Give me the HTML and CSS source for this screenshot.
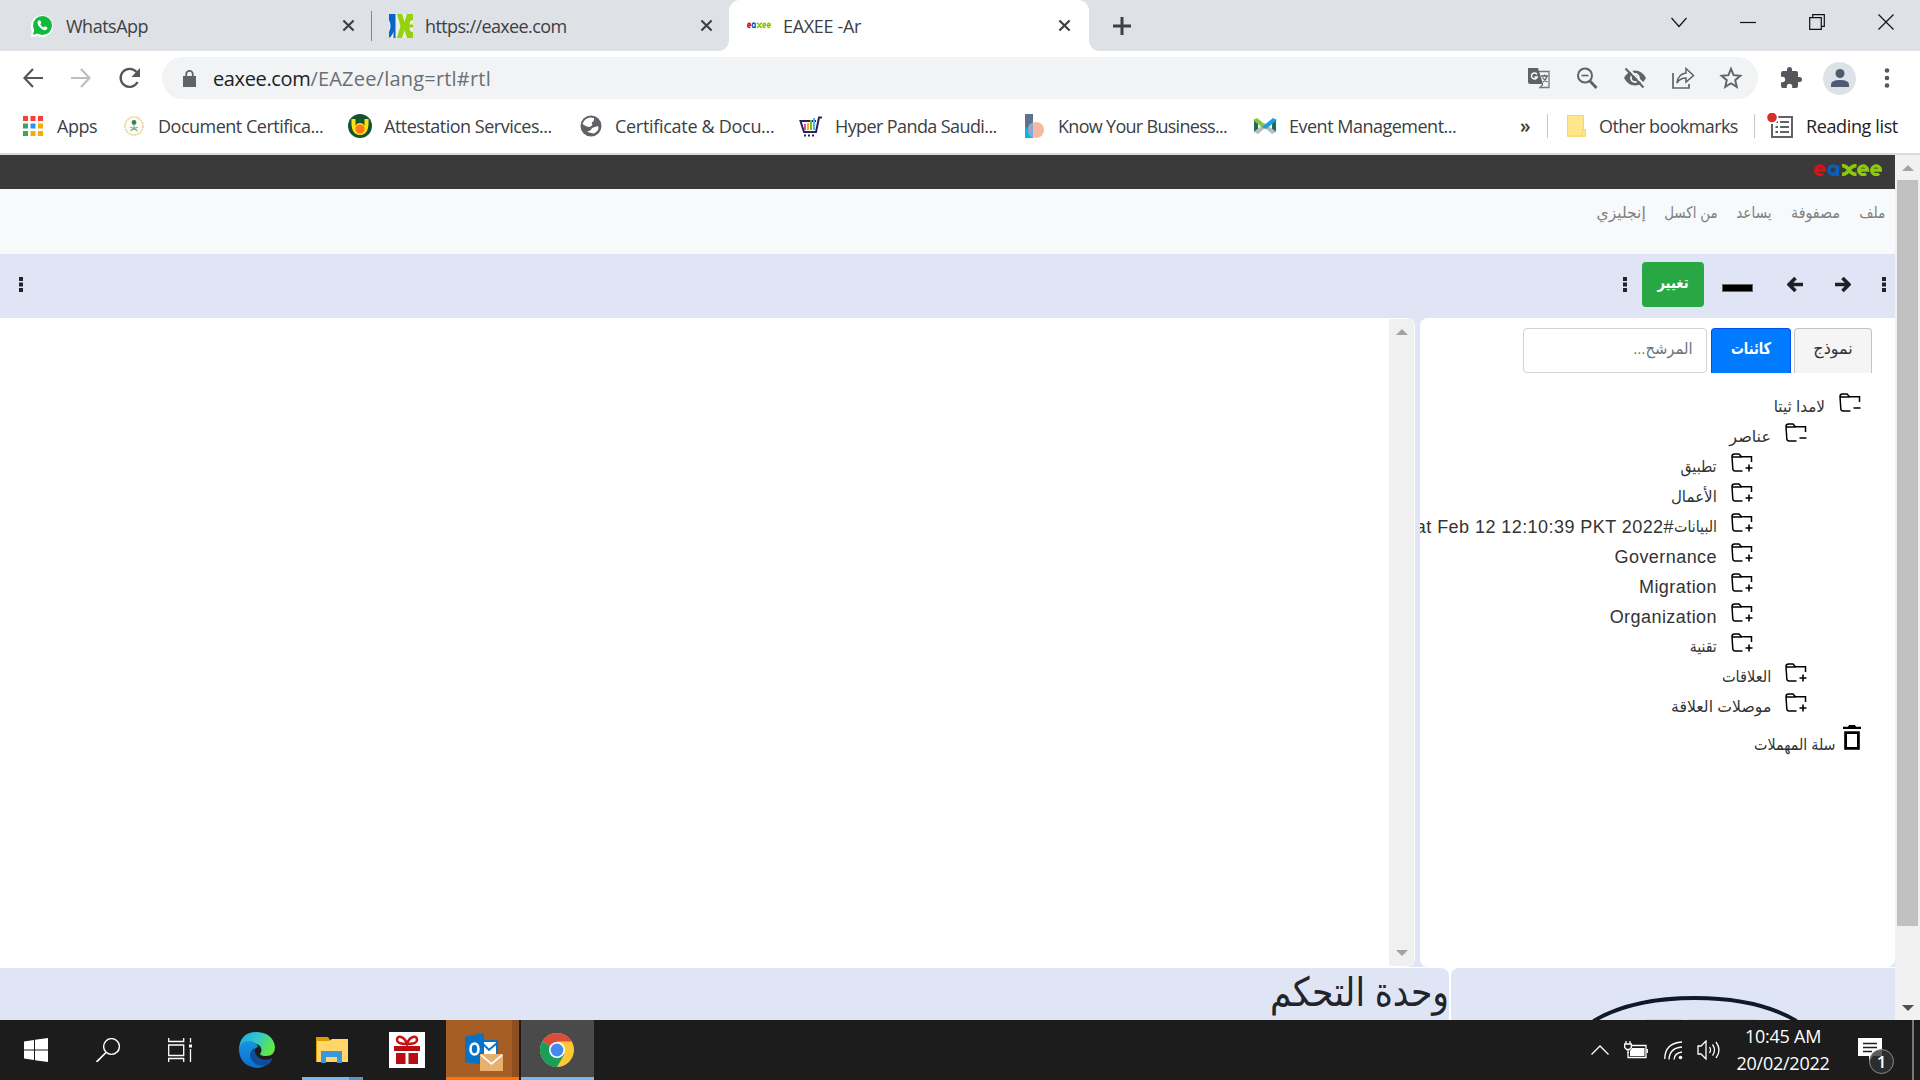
FILE: index.html
```html
<!DOCTYPE html>
<html lang="ar">
<head>
<meta charset="utf-8">
<title>EAXEE -Ar</title>
<link rel="stylesheet" href="styles.css">
</head>
<body>
<svg class="defs" width="0" height="0">
  <symbol id="i-close" viewBox="0 0 14 14"><path d="M1.5 1.5l11 11M12.5 1.5l-11 11" stroke="#3c4043" stroke-width="2.3" fill="none"/></symbol>
  <symbol id="i-dots" viewBox="0 0 6 16"><path d="M1 0h4v4H1zM1 5.5h4v4H1zM1 11h4v4H1z" fill="#212529"/></symbol>
  <symbol id="i-plus" viewBox="0 0 22 20"><path d="M11.500 18H4.200Q2 18 1.800 15.800L1 3.500Q1 1 3.500 1H8l2.500 2.700H20.500V9M1.200 4H11" fill="none" stroke="#000" stroke-width="1.500"/><path d="M18 11.500v7M14.500 15h7" stroke="#000" stroke-width="1.600"/></symbol>
  <symbol id="i-minus" viewBox="0 0 22 20"><path d="M11.500 18H4.200Q2 18 1.800 15.800L1 3.500Q1 1 3.500 1H8l2.500 2.700H20.500V9M1.200 4H11" fill="none" stroke="#000" stroke-width="1.500"/><path d="M14.500 15h7" stroke="#000" stroke-width="1.600"/></symbol>
  <symbol id="i-logo" viewBox="0 0 68 12"><g fill="none" stroke-width="3.200"><path d="M1.800 6.200H10.500A4.400 4.400 0 1 0 9 9.600" stroke="#d8111b"/><path d="M23.500 1.600V12M23.500 6A4.300 4.300 0 1 0 19 10.400Q22.500 10 23.500 6" stroke="#0a5fc0"/><path d="M28 1.700Q32 1.500 35 6Q38 10.500 42.500 10.300M42.500 1.700Q38 1.500 35 6Q32 10.500 28 10.300" stroke="#8cc90b" stroke-width="3.600"/><path d="M44.800 6.200H53.500A4.400 4.400 0 1 0 52 9.600M57.800 6.200H66.500A4.400 4.400 0 1 0 65 9.600" stroke="#8cc90b"/></g></symbol>
</svg>

<header class="tabstrip">
  <div class="tab tab-first">
    <svg width="24" height="24" viewBox="0 0 24 24"><path d="M1 23L2 17A11 11 0 1 1 7 22Z" fill="#fff"/><circle cx="12.500" cy="11.500" r="9.500" fill="#12b93c"/><path d="M3 21l1.500-6 4 4z" fill="#12b93c"/><path d="M8.500 6.500q1.500-1 2.300 1l.5 1.600-1 1.200q1.200 2.300 3.400 3.200l1.300-1.300 2.300 1.200q.5 1.800-1.500 2.600-2.500.7-5.400-2-3-2.900-3-5.300 0-1.400 1.100-2.200z" fill="#fff"/></svg>
    <span class="t t-whats">WhatsApp</span>
    <svg class="x" width="13" height="13"><use href="#i-close"/></svg>
  </div>
  <div class="tab tab-second">
    <svg width="24" height="24" viewBox="0 0 24 24"><path fill="#e8f0e0" d="M0 0h24v24H0z"/><path d="M0 0h6.500v24H4.500V17Q3.500 22 0 24V18Q3 12 0 6z" fill="#0c63c7"/><path d="M8 0h5l2.500 8L18 0h6v6q-3.500 0-3.500 4.500H24v3h-3.500Q20.500 18 24 18v6h-6l-2.500-8L13 24H8l3.500-12z" fill="#95d10c"/></svg>
    <span class="t t-url">https://eaxee.com</span>
    <svg class="x" width="13" height="13"><use href="#i-close"/></svg>
  </div>
  <div class="tab tab-active">
    <svg width="24" height="7" viewBox="0 0 68 14" preserveAspectRatio="none"><use href="#i-logo" width="68" height="13"/></svg>
    <span class="t t-ar">EAXEE -Ar</span>
    <svg class="x" width="13" height="13"><use href="#i-close"/></svg>
  </div>
  <svg class="newtab" width="18" height="18" viewBox="0 0 18 18"><path d="M9 0v18M0 9h18" stroke="#3c4043" stroke-width="3"/></svg>
  <div class="winctl">
    <svg width="16" height="16" viewBox="0 0 16 16"><path d="M.5 4L8 12.500l7.500-8.500"/></svg>
    <svg width="16" height="16" viewBox="0 0 16 16"><path d="M0 8.500h16"/></svg>
    <svg width="16" height="16" viewBox="0 0 16 16"><path d="M.7 3.700h11.600v11.600H.7zM3.700 3.700V.7h11.600v11.600h-3"/></svg>
    <svg width="16" height="16" viewBox="0 0 16 16"><path d="M.5.500l15 15M15.500.500l-15 15"/></svg>
  </div>
</header>

<nav class="toolbar">
  <svg width="20" height="20" viewBox="0 0 20 20"><path d="M20 10H1.500M10 1L1.500 10l8.500 9" fill="none" stroke="#54585c" stroke-width="2.200"/></svg>
  <svg width="20" height="20" viewBox="0 0 20 20"><path d="M0 10h18.500M10 1l8.500 9-8.500 9" fill="none" stroke="#bcbec1" stroke-width="2.200"/></svg>
  <svg width="22" height="22" viewBox="0 0 22 22"><path d="M18.600 15A9 9 0 1 1 17.500 5" fill="none" stroke="#54585c" stroke-width="2.300"/><path d="M21 1v9h-8.500z" fill="#54585c"/></svg>
  <div class="omnibox">
    <svg class="lock" width="13" height="17" viewBox="0 0 13 17"><path d="M0 6h13v11H0z" fill="#5f6368"/><path d="M3.200 7V4.200a3.300 3.300 0 0 1 6.600 0V7" fill="none" stroke="#5f6368" stroke-width="1.800"/></svg>
    <span class="url"><b>eaxee.com</b>/EAZee/lang=rtl#rtl</span>
    <div class="omni-icons">
      <svg viewBox="0 0 24 24"><path d="M1 2h10l5 16H3q-2 0-2-2z" fill="#5f6368"/><path d="M12 5.500h10v16H13l3-3.500" fill="none" stroke="#73777b" stroke-width="1.300"/><path d="M14 10h7M17.500 8.500V10M20 10q-1 4-4 6M15.500 11.500q2 3 5 4.500" fill="none" stroke="#5f6368" stroke-width="1.300"/><path d="M10 8.300A3 3 0 1 0 10.300 11H7.500" fill="none" stroke="#fff" stroke-width="1.500"/></svg>
      <svg viewBox="0 0 24 24"><circle cx="10" cy="9.500" r="7" fill="none" stroke="#5f6368" stroke-width="2"/><path d="M15 15l6.500 7" stroke="#5f6368" stroke-width="2.800"/><path d="M6.500 9.500h7" stroke="#5f6368" stroke-width="1.600"/></svg>
      <svg viewBox="0 0 24 24"><path d="M1 12Q5 4.500 12 4.500T23 12Q19 19.500 12 19.500T1 12z" fill="#5f6368"/><circle cx="12" cy="12" r="4" fill="none" stroke="#f1f3f4" stroke-width="1.800"/><path d="M4.500 1.500L22.500 20" stroke="#f1f3f4" stroke-width="2"/><path d="M2.500 2.500L20.500 21.500" stroke="#5f6368" stroke-width="2"/></svg>
      <svg viewBox="0 0 24 24"><path d="M2 7v15h16v-4" fill="none" stroke="#5f6368" stroke-width="1.700"/><path d="M15 2.500l7.500 7L15 16v-4q-6 0-9 5Q7 8 15 7z" fill="none" stroke="#5f6368" stroke-width="1.500"/></svg>
      <svg viewBox="0 0 24 24"><path d="M12 2.800l2.600 6.300 6.800.6-5.200 4.500 1.600 6.700L12 17.300l-5.800 3.600 1.600-6.700-5.200-4.500 6.800-.6z" fill="none" stroke="#5f6368" stroke-width="1.900"/></svg>
    </div>
  </div>
  <div class="chrome-icons">
    <svg viewBox="0 0 24 24"><path d="M20.500 11H19V7a2 2 0 0 0-2-2h-4V3.500a2.500 2.500 0 0 0-5 0V5H4a2 2 0 0 0-2 2v3.800h1.500a2.700 2.700 0 0 1 0 5.400H2V20a2 2 0 0 0 2 2h3.800v-1.500a2.700 2.700 0 0 1 5.400 0V22H17a2 2 0 0 0 2-2v-4h1.500a2.500 2.500 0 0 0 0-5z" fill="#54585c"/></svg>
    <div class="avatar"><svg viewBox="0 0 24 24"><circle cx="12" cy="7.500" r="4.500" fill="#4c5a73"/><path d="M3 21v-2.500Q3 14 12 14t9 4.500V21z" fill="#4c5a73"/></svg></div>
    <svg viewBox="0 0 24 24"><g fill="#54585c"><circle cx="12" cy="4.500" r="2.300"/><circle cx="12" cy="12" r="2.300"/><circle cx="12" cy="19.500" r="2.300"/></g></svg>
  </div>
</nav>

<nav class="bookmarks">
  <div class="bm"><svg viewBox="0 0 24 24"><path d="M2 2h5v5H2zM9.500 2h5v5h-5zM17 2h5v5h-5z" fill="#f44336"/><path d="M2 9.500h5v5H2zM2 17h5v5H2z" fill="#3ba55c"/><path d="M9.500 9.500h5v5h-5z" fill="#2196f3"/><path d="M17 9.500h5v5h-5zM9.500 17h5v5h-5zM17 17h5v5h-5z" fill="#f9ab00"/></svg><span class="t b1">Apps</span></div>
  <div class="bm"><svg viewBox="0 0 24 24"><circle cx="12" cy="12" r="9" fill="#fffdf5" stroke="#ead49a" stroke-width="1.700" stroke-dasharray="2.200 .7"/><circle cx="12" cy="8.500" r="2.400" fill="#2d8a58"/><path d="M12 10v5M8 13.500q4 0 7.500 3.500M16 13.500q-4 0-7.500 3.500" stroke="#7fae92" stroke-width="1.100" fill="none"/></svg><span class="t b2">Document Certifica...</span></div>
  <div class="bm"><svg viewBox="0 0 24 24"><circle cx="12" cy="12" r="12" fill="#14532f"/><path d="M3.500 5h4v7q1-3 4.500-3t4.500 3V5h4q1 16-8.500 16T3.500 5z" fill="#ffe018"/><circle cx="12" cy="15" r="4.600" fill="#ff7818"/></svg><span class="t b3">Attestation Services...</span></div>
  <div class="bm"><svg viewBox="0 0 24 24"><circle cx="12" cy="12" r="10.500" fill="#5f6368"/><path d="M3.500 10q5 4 8 2.500t1-4q3-1 2.500-4.500Q9 2 5 7zM13 14l6-2q2 4-4 7.500-4-.5-7-2 4-.5 5-3.500z" fill="#fff"/></svg><span class="t b4">Certificate &amp; Docu...</span></div>
  <div class="bm"><svg viewBox="0 0 24 24"><path d="M23 3.500h-3L17 18H5L1.500 7H17" fill="none" stroke="#28235f" stroke-width="2"/><path d="M6 10v6" stroke="#ef4c9c" stroke-width="2"/><path d="M9 9v7" stroke="#f5b11d" stroke-width="2"/><path d="M12 6v10" stroke="#7bb928" stroke-width="2"/><path d="M15 4v12" stroke="#4eb8ea" stroke-width="2"/><path d="M5 21.500h2M9 21.500h2M13 21.500h2" stroke="#28235f" stroke-width="2"/></svg><span class="t b5">Hyper Panda Saudi...</span></div>
  <div class="bm"><svg viewBox="0 0 24 24"><path d="M3 0h8v24H3z" fill="#5b738c"/><path d="M3 12l8 12H3z" fill="#00b8ea"/><circle cx="14" cy="16" r="8" fill="#f5b9a2"/><path d="M11 8.500v15A8 8 0 0 1 11 8.500z" fill="#8ea7cf"/></svg><span class="t b6">Know Your Business...</span></div>
  <div class="bm"><svg viewBox="0 0 24 24"><path d="M1 6v12l4-3V9zM23 6v12l-4-3V9z" fill="#246a5a"/><path d="M1 18l11-9 11 9-4 2-7-6-7 6z" fill="#b5bcc4"/><path d="M0 6l4-2 10 8-3 3z" fill="#87c63b"/><path d="M24 6l-4-2-11 9 4 2z" fill="#1d9ce3"/></svg><span class="t b7">Event Management...</span></div>
  <span class="more">»</span>
  <div class="bm other"><svg viewBox="0 0 24 24"><path d="M3 1h17v14h2v8H3z" fill="#ffe68d"/><path d="M3.500 1.500h16v14h2v6.500h-18zM18 22v-6.500h2" fill="none" stroke="#f7d662"/></svg><span class="t b8">Other bookmarks</span></div>
  <div class="bm reading"><svg viewBox="0 0 28 26"><path d="M5 4h20v20H5z" fill="#fff" stroke="#5f6368" stroke-width="2"/><path d="M13 9h9M13 14h9M13 19h9M8.500 9h2.500M8.500 14h2.500M8.500 19h2.500" stroke="#5f6368" stroke-width="2"/><circle cx="5.500" cy="5" r="6" fill="#fff"/><circle cx="5" cy="4.500" r="4.800" fill="#d93025"/></svg><span class="t b9">Reading list</span></div>
</nav>

<main class="page">
  <div class="app" dir="rtl">
    <div class="brandbar"><svg width="68" height="12"><use href="#i-logo"/></svg></div>
    <div class="menu"><div class="m1"><span>ملف</span></div><div class="m2"><span>مصفوفة</span></div><div class="m3"><span>يساعد</span></div><div class="m4"><span>من اكسل</span></div><div class="m5"><span>إنجليزي</span></div></div>
    <div class="actions">
      <svg class="dots" width="6" height="16"><use href="#i-dots"/></svg>
      <svg class="a-next" width="17" height="17" viewBox="0 0 17 17"><path d="M1 8.500h14M8.500 2l6.500 6.500L8.500 15" fill="none" stroke="#1d2125" stroke-width="3.600"/></svg>
      <svg class="a-prev" width="17" height="17" viewBox="0 0 17 17"><path d="M16 8.500H2M8.500 2L2 8.500 8.500 15" fill="none" stroke="#1d2125" stroke-width="3.600"/></svg>
      <span class="swatch"></span>
      <button class="change"><span class="g1">تغيير</span></button>
      <svg class="dots2" width="6" height="16"><use href="#i-dots"/></svg>
      <svg class="dots3" width="6" height="16"><use href="#i-dots"/></svg>
    </div>
    <div class="workspace">
      <aside class="side">
        <div class="filters">
          <div class="ftab"><span class="f1">نموذج</span></div>
          <div class="ftab on"><span class="f2">كائنات</span></div>
          <div class="finput"><span class="f3">المرشح...</span></div>
        </div>
        <ul class="tree">
          <li class="l1"><svg><use href="#i-minus"/></svg><span class="r1">لامدا ثيتا</span></li>
          <li class="l2"><svg><use href="#i-minus"/></svg><span class="r2">عناصر</span></li>
          <li class="l3"><svg><use href="#i-plus"/></svg><span class="r3">تطبيق</span></li>
          <li class="l3"><svg><use href="#i-plus"/></svg><span class="r4">الأعمال</span></li>
          <li class="l3"><svg><use href="#i-plus"/></svg><div class="r5"><span class="r5a">البيانات</span><bdi class="lat" dir="ltr">Sat Feb 12 12:10:39 PKT 2022#</bdi></div></li>
          <li class="l3"><svg><use href="#i-plus"/></svg><span class="lat">Governance</span></li>
          <li class="l3"><svg><use href="#i-plus"/></svg><span class="lat">Migration</span></li>
          <li class="l3"><svg><use href="#i-plus"/></svg><span class="lat">Organization</span></li>
          <li class="l3"><svg><use href="#i-plus"/></svg><span class="r9">تقنية</span></li>
          <li class="l2"><svg><use href="#i-plus"/></svg><span class="r10">العلاقات</span></li>
          <li class="l2"><svg><use href="#i-plus"/></svg><span class="r11">موصلات العلاقة</span></li>
        </ul>
        <div class="bin"><svg width="20" height="26" viewBox="0 0 20 26"><path d="M1 4V1.800h5L7 0h6l1 1.800h5V4z"/><path d="M3.600 7.600h12.800v15.800H3.600z" fill="none" stroke="#000" stroke-width="2.800"/></svg><span class="r12">سلة المهملات</span></div>
      </aside>
      <section class="editor">
        <div class="escroll"><i class="up"></i><i class="down"></i></div>
      </section>
    </div>
    <div class="lower">
      <div class="preview"><svg width="444" height="52" viewBox="0 0 444 52"><path d="M142.500 53Q181 30 244 30T345.500 53" fill="none" stroke="#0e1a27" stroke-width="3.800"/><path d="M195 51.500h36M238 51.500h68" stroke="#cfd3df"/></svg></div>
      <div class="console"><h1 class="h">وحدة التحكم</h1></div>
    </div>
  </div>
  <div class="pscroll"><i class="up"></i><div class="thumb"></div><i class="down dark"></i></div>
</main>

<footer class="taskbar">
  <div class="tk"><svg width="24" height="24" viewBox="0 0 24 24"><path d="M0 3.500l10-1.500v9.500H0zM11 1.800L24 0v11.500H11zM0 12.500h10V22L0 20.500zM11 12.500h13V24l-13-1.800z" fill="#fff"/></svg></div>
  <div class="tk"><svg width="24" height="24" viewBox="0 0 24 24"><circle cx="15.500" cy="8.500" r="7.900" fill="none" stroke="#fff" stroke-width="1.400"/><path d="M10 14.500L.5 24" stroke="#fff" stroke-width="1.700"/></svg></div>
  <div class="tk"><svg width="24" height="24" viewBox="0 0 24 24"><path d="M.7 0v3.500h15V0M.7 7h15v10.500H.7zM.7 24v-3.500h15V24M22.500 0v4.500M22.500 11v13" fill="none" stroke="#fff" stroke-width="1.300"/><path d="M21 6.500h3v3h-3z" fill="#fff"/></svg></div>
  <div class="tk edge"><svg width="36" height="36" viewBox="0 0 36 36"><defs><linearGradient id="eg" x1="0" x2="1" y2=".4"><stop offset="0" stop-color="#1ba0dc"/><stop offset=".5" stop-color="#33c5d2"/><stop offset="1" stop-color="#5ee84a"/></linearGradient><linearGradient id="eb" x2="0" y2="1"><stop stop-color="#1a94df"/><stop offset="1" stop-color="#0870cd"/></linearGradient></defs><path d="M0 17Q1 0 18 0 34 1 36 15q0 9-9 9-5 0-6-2 3-4 0-8Q14 7 0 17z" fill="url(#eg)"/><path d="M0 17Q3 8 11 9q7 1 8 6-5 1-5 8 2 13 15 8-4 5-12 5Q0 33 0 17z" fill="url(#eb)"/><path d="M15 16q-6 5-3 11 5 9 16 6 4-2 5-6-1-1-2 0-6 2-11-1-4-3-5-10z" fill="#104e9b"/></svg></div>
  <div class="tk"><svg width="33" height="28" viewBox="0 0 33 28"><path d="M0 1h12l2 3v22H0z" fill="#dd9b00"/><path d="M1 5l12 0 3-2h16v23H1z" fill="#ffd667"/><path d="M5 27V15h21v12h-5v-6H10v6z" fill="#3a96dd"/></svg><i class="under folder"></i></div>
  <div class="tk gift"><svg width="36" height="36" viewBox="0 0 36 36"><path fill="#fff" d="M0 0h36v36H0z"/><path d="M5 14h26v5H5zM7 21h9.500v11H7zM19.500 21H29v11h-9.500z" fill="#b80d12"/><path d="M18 12Q8 12 8 8q0-4 4-3 4 1 6 7 2-6 6-7 4-1 4 3t-10 4" fill="none" stroke="#c91218" stroke-width="2.500"/></svg></div>
  <div class="tk outlook"><svg width="38" height="38" viewBox="0 0 38 38"><path d="M16 8h16v16H16z" fill="#fff" stroke="#0872c6" stroke-width="2"/><path d="M17 10l7 7 8-7" fill="none" stroke="#0872c6" stroke-width="2"/><path d="M0 3.500L19 0v32L0 29z" fill="#0872c6"/><ellipse cx="9.500" cy="16" rx="4" ry="5.500" fill="none" stroke="#fff" stroke-width="2.600"/><path d="M15 21h23v17H15z" fill="#e8b06d"/><path d="M16 22l10.500 9L37 22" fill="none" stroke="#fff" stroke-width="1.700"/></svg><i class="under"></i></div>
  <div class="tk chrome"><svg width="34" height="34" viewBox="0 0 34 34"><circle cx="17" cy="17" r="17" fill="#fcc934"/><path d="M17 17L2.300 8.500A17 17 0 0 1 31.700 8.500H17z" fill="#dd4b3e"/><path d="M2.300 8.500A17 17 0 0 0 17 34l7.400-12.800L17 17z" fill="#1a9f5a"/><circle cx="17" cy="17" r="8" fill="#fff"/><circle cx="17" cy="17" r="6.400" fill="#4688f1"/></svg><i class="under"></i></div>
  <div class="tray">
    <svg class="up1" width="18" height="10" viewBox="0 0 18 10"><path d="M.5 9.500L9 1l8.500 8.500"/></svg>
    <svg class="bat" width="24" height="18" viewBox="0 0 24 18"><path d="M7 4.500h15V16.500H4V11"/><path d="M8 7h12.500v8H6v-5z"/><path d="M23.300 8v4M2 0v3M6 0v3M.7 3h6.600v3.500L5.500 8.500h-3L.7 6.500zM4 8.500V12"/></svg>
    <svg class="wifi" width="19" height="19" viewBox="0 0 19 19"><path d="M.7 18Q1 2 18 1M5 18.500Q5.500 7 18 6M10 18.500q.5-6.500 8-7.500"/><circle cx="16.500" cy="16.500" r="1.800" fill="#fff" stroke="none"/></svg>
    <svg class="spk" width="23" height="20" viewBox="0 0 23 20"><path d="M1 6h3l5-5v18l-5-5H1zM12.500 7q2 3 0 6M15.500 4.500q4 5.500 0 11M19 2q6 8 0 16"/></svg>
    <div class="clock"><span class="t c1">10:45 AM</span><span class="t c2">20/02/2022</span></div>
    <div class="note"><svg width="24" height="24" viewBox="0 0 24 24"><path d="M0 0h24v18H15l-4 6v-6H0z"/><path d="M5 5.500h14M5 9.500h14M5 13.500h9"/></svg><b>1</b></div>
    <i class="peek"></i>
  </div>
</footer>
</body>
</html>
```
FILE: styles.css
```css
* { box-sizing: border-box; }
body { margin: 0; width: 1920px; height: 1080px; overflow: hidden; display: flex; flex-direction: column; background: #fff; font-family: "Open Sans", "Noto Sans", sans-serif; color: #3c4043; }
.defs { position: absolute; }
svg { flex: none; display: block; }
.t { white-space: nowrap; }

.tabstrip { height: 51px; flex: none; background: #dee1e6; display: flex; align-items: center; font-size: 18px; letter-spacing: -.5px; }
.t-url { letter-spacing: -.62px; }
.t-ar { letter-spacing: -.33px; }
.tab { display: flex; align-items: center; height: 51px; }
.tab .x { margin-left: auto; }
.tab-first { width: 372px; padding: 0 17px 0 30px; gap: 12px; background: linear-gradient(#85888c, #85888c) right center / 1.500px 30px no-repeat; }
.tab-second { width: 357px; padding: 0 16px 0 17px; gap: 12px; }
.tab-active { width: 360px; padding: 0 18px 0 18px; gap: 12px; background: #fff; border-radius: 11px 11px 0 0; position: relative; }
.tab-active::before, .tab-active::after { content: ""; position: absolute; bottom: 0; width: 10px; height: 10px; }
.tab-active::before { left: -10px; background: radial-gradient(circle at 0 0, #dee1e6 9.500px, #fff 10px); }
.tab-active::after { right: -10px; background: radial-gradient(circle at 100% 0, #dee1e6 9.500px, #fff 10px); }
.newtab { margin-left: 24px; }
.winctl { margin: 0 26px 8px auto; display: flex; gap: 53px; }
.winctl path { fill: none; stroke: #111; stroke-width: 1.200; }

.toolbar { height: 54px; flex: none; display: flex; align-items: center; padding: 0 21px 0 23px; }
.toolbar > svg { margin-right: 28px; }
.toolbar > svg:nth-child(3) { margin-right: 21px; }
.omnibox { width: 1596px; height: 42px; border-radius: 21px; background: #f1f3f4; display: flex; align-items: center; padding: 0 15px 0 21px; }
.url { margin-left: 17px; font-size: 20px; letter-spacing: .2px; color: #6b6f73; white-space: nowrap; line-height: 24px; padding-top: 1px; }
.url b { font-weight: 400; letter-spacing: -.36px; color: #202124; }
.omni-icons { margin-left: auto; display: flex; gap: 24px; }
.omni-icons svg { width: 24px; height: 24px; }
.chrome-icons { margin-left: auto; display: flex; align-items: center; gap: 20px; }
.chrome-icons > svg { width: 24px; height: 24px; }
.avatar { width: 33px; height: 33px; border-radius: 50%; background: #dee1e6; display: grid; place-items: center; }
.avatar svg { width: 24px; height: 24px; }
.chrome-icons > svg:last-child { margin-left: -1px; }

.bookmarks { height: 50px; flex: none; border-bottom: 2px solid #dadada; padding: 0 0 7px 21px; display: grid; grid-template-columns: 101px 226px 231px 220px 223px 231px 267px 27px 207px 1fr; align-items: center; font-size: 18px; letter-spacing: -.5px; }
.bm { display: flex; align-items: center; gap: 12px; }
.bm svg { width: 24px; height: 24px; }
.b4 { letter-spacing: -.3px; }
.b5 { letter-spacing: -.6px; }
.b6 { letter-spacing: -.7px; }
.b8 { letter-spacing: -.6px; }
.b9 { letter-spacing: -.37px; }
.more { font-size: 19px; line-height: 20px; font-weight: 600; }
.other, .reading { height: 24px; border-left: 1px solid #c5c7ca; }
.other { padding-left: 16px; gap: 11px; }
.reading { padding-left: 12px; gap: 11px; color: #202124; }
.reading svg { width: 28px; height: 26px; }

.page { flex: 1; min-height: 0; display: flex; }
.app { width: 1895px; display: flex; flex-direction: column; font-family: "Liberation Sans", "DejaVu Sans", sans-serif; color: #212529; }
.app span, .h { display: inline-block; white-space: nowrap; transform: scaleX(var(--sx, 1)); transform-origin: right center; }
.brandbar { height: 34px; background: #3a3a3a; padding: 9px 13px; }
.menu { height: 65px; background: #f8f9fa; display: flex; font-size: 16px; color: #7f8081; padding: 12px 10px 0 0; line-height: 24px; }
.m1 { width: 45px; --sx: .86; }
.m2 { width: 68px; --sx: .89; }
.m3 { width: 54px; --sx: .85; }
.m4 { width: 72px; --sx: .84; }
.m5 { --sx: .97; }
.actions { height: 64px; background: #e0e5f5; display: flex; align-items: center; padding-bottom: 3px; }
.dots { margin-right: 8px; }
.a-next { margin-right: 30px; }
.a-prev { margin-right: 30px; }
.app .swatch { width: 31px; height: 8px; margin: 6px 34px 0 18px; background: #000; border: 1px solid #666; }
.change { width: 62px; height: 45px; border: 0; border-radius: 4px; background: #28a745; color: #fff; font: 700 16px "Liberation Sans", "DejaVu Sans", sans-serif; padding: 0 0 5px; }
.app .g1 { --sx: .82; transform-origin: center; }
.dots2 { margin-right: 14px; }
.dots3 { margin: 0 auto 0 18px; }
.workspace { height: 650px; display: flex; background: #e0e5f5; border-bottom: 1px solid #fff; }
.side { width: 475px; background: #fff; border-radius: 0 0 8px 8px; border-top-left-radius: 8px; overflow: hidden; margin-left: 5px; padding: 10px 23px 0 0; }
.filters { display: flex; height: 45px; }
.ftab { width: 78px; border: 1px solid #c4c4c4; border-bottom: 0; border-radius: 4px 4px 0 0; background: #f5f5f5; display: grid; place-items: center; margin-left: 3px; padding-bottom: 6px; color: #333; }
.ftab.on { width: 80px; background: #007bff; border-color: #0050f0; color: #fff; font-weight: 700; margin-left: 4px; }
.app .f2 { --sx: .8; transform-origin: center; }
.finput { width: 184px; border: 1px solid #ced4da; border-radius: 4px; padding: 8px 14px; color: #6c757d; line-height: 24px; }
.f3 { --sx: .92; }
.tree { list-style: none; margin: 20px 0 0; padding: 0 11px 0 0; }
.tree li { height: 30px; display: flex; gap: 14px; white-space: nowrap; color: #333; }
.tree svg { width: 22px; height: 20px; }
.tree span, .r5 bdi { line-height: 24px; padding-top: 2px; }
.r5 { display: flex; width: 301px; }
.r5 .r5a { width: 43px; flex: none; direction: rtl; }
.l2 { padding-right: 54px; }
.l3 { padding-right: 108px; }
.lat { font-size: 18px; letter-spacing: .44px; }
.r1 { --sx: .95; }
.r3 { --sx: .89; }
.r4 { --sx: .94; }
.r5a { --sx: .89; }
.r9 { --sx: .88; }
.r10 { --sx: .91; }
.r11 { --sx: .98; }
.r12 { --sx: .89; }
.bin { display: flex; padding-right: 10px; margin-top: 2px; gap: 6px; color: #333; }
.bin span { line-height: 24px; padding-top: 8px; }
.editor { width: 1415px; background: #fff; border-radius: 0 8px 8px 0; padding: 1px 1px 1px 0; display: flex; }
.escroll { width: 25px; background: #f0f0f0; display: flex; flex-direction: column; justify-content: space-between; align-items: center; padding: 10px 0 10px; }
.up, .down { width: 0; height: 0; border: solid transparent; border-width: 0 6px 6px; border-bottom-color: #a3a3a3; }
.down { border-width: 6px 6px 0; border-top-color: #a3a3a3; }
.down.dark { border-top-color: #505050; }
.lower { flex: 1; min-height: 0; display: flex; gap: 2px; overflow: hidden; background: #fff; }
.preview { width: 444px; background: #e0e5f5; border-top-left-radius: 8px; overflow: hidden; }
.console { width: 1449px; background: #e0e5f5; border-top-right-radius: 8px; }
.h { margin: 0; font-size: 40px; font-weight: 500; line-height: 48px; --sx: .865; }
.pscroll { width: 25px; background: #f1f1f1; display: flex; flex-direction: column; align-items: center; padding: 10px 0 9px; }
.thumb { width: 21px; height: 746px; margin: 9px 0 auto; background: #c1c1c1; }

.taskbar { height: 60px; flex: none; background: #1c1c1c; display: flex; color: #fff; }
.tk { width: 72px; display: grid; place-items: center; position: relative; }
.edge { width: 82px; }
.edge + .tk { width: 68px; }
.gift { width: 80px; padding-left: 2px; }
.outlook { width: 73px; background: linear-gradient(90deg, #a65e26 66px, #8e4f20 66px); padding: 4px 0 0 2px; }
.chrome { width: 73px; background: #4a4a4a; margin-left: 2px; padding-right: 2px; }
.under { position: absolute; bottom: 0; left: 0; width: 100%; height: 3px; background: #76b9ed; }
.outlook .under { background: #ff7200; }
.folder { left: 4px; width: 61px; background: linear-gradient(90deg, #76b9ed 47px, #5f93bb 47px); }
.tray { margin-left: auto; display: flex; align-items: center; width: 329px; }
.tray path { fill: none; stroke: #fff; stroke-width: 1.300; }
.tray .bat path:nth-child(2) { fill: #fff; stroke: none; }
.bat { margin-left: 15px; }
.wifi { margin-left: 16px; }
.spk { margin-left: 14px; }
.clock { width: 122px; margin-left: 2px; display: flex; flex-direction: column; align-items: center; font-size: 18px; letter-spacing: -.25px; line-height: 27px; }
.note { position: relative; margin-left: 14px; }
.tray .note path:first-child { fill: #fff; stroke: none; }
.tray .note path:last-child { stroke: #1c1c1c; }
.note b { position: absolute; left: 11px; top: 11px; width: 25px; height: 25px; border: 1px solid #8a8a8a; border-radius: 50%; background: rgba(50, 50, 50, .8); font: 600 17px/23px "Open Sans", sans-serif; text-align: center; }
.peek { width: 2px; height: 60px; background: #777; margin-left: auto; margin-right: 6px; }
```
